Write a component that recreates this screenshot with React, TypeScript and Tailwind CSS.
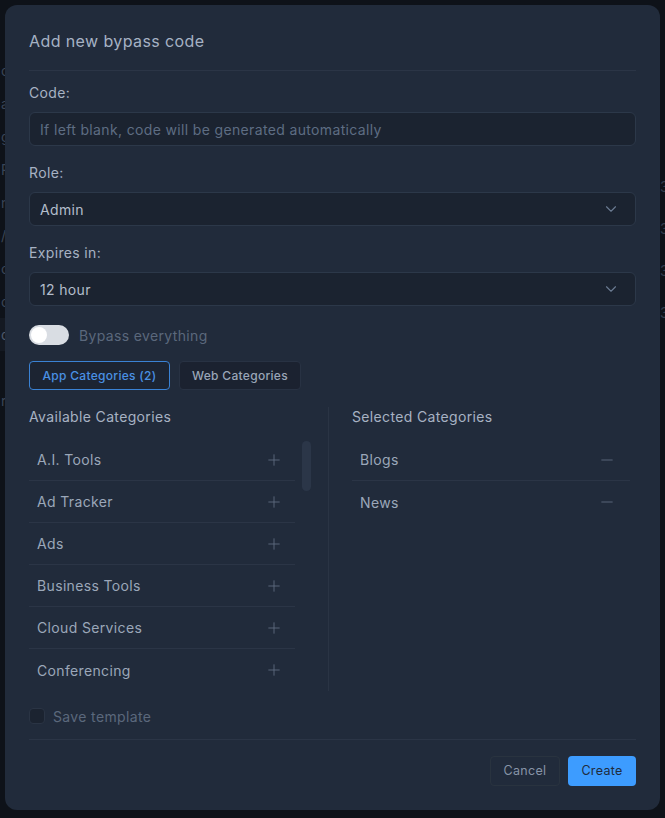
import { ChevronDown, Plus, Minus } from "lucide-react";

const available = ["A.I. Tools", "Ad Tracker", "Ads", "Business Tools", "Cloud Services", "Conferencing"];
const selected = ["Blogs", "News"];
const bgLeft = ["c", "a", "g", "R", "m", "/", "c", "c", "d", "", "r"];

function Label({ children }: { children: string }) {
  return <div className="h-5 text-[14px] leading-5 tracking-[0.35px] text-[#a7b2c3]">{children}</div>;
}

function Select({ value }: { value: string }) {
  return (
    <div className="mt-[9px] h-[34px] rounded-md border border-[#2c3849] bg-[#1b2330] px-[10px] flex items-center justify-between">
      <span className="text-[14px] tracking-[0.35px] text-[#b3bdcb]">{value}</span>
      <ChevronDown size={18} strokeWidth={1.5} className="text-[#6b7b92] mr-[5px]" />
    </div>
  );
}

export default function App() {
  return (
    <div
      className="relative w-[665px] h-[818px] overflow-hidden bg-[#0e1219]"
      style={{ fontFamily: "Inter, 'Noto Sans', sans-serif" }}
    >
      {/* page behind the overlay */}
      <div className="flex justify-between text-[14px] text-[#3a4557]">
        <div className="pt-[54px] flex flex-col">
          {bgLeft.map((c, i) => (
            <div key={i} className={`h-[33px] flex items-center pl-[1px] ${c === "d" ? "bg-[#141922] text-[#4d5a6d]" : ""}`}>
              {c}
            </div>
          ))}
        </div>
        <div className="pt-[176px] flex flex-col w-[6px] overflow-hidden">
          {["3", "3", "3", "3"].map((c, i) => (
            <div key={i} className="h-[42px] pl-[1px] text-[#333e4e]">{c}</div>
          ))}
        </div>
      </div>

      <div className="absolute left-[5px] top-[5px] w-[655px] h-[805px] rounded-xl bg-[#212b3b] px-6 pt-6 flex flex-col">
        <h2 className="text-[16px] leading-6 tracking-[0.4px] text-[#a6b2c4]">Add new bypass code</h2>
        <div className="mt-[17px] h-px bg-[#2b3546]" />

        <div className="mt-3">
          <Label>Code:</Label>
          <div className="mt-[9px] h-[34px] rounded-md border border-[#2c3849] bg-[#1b2330] px-[10px] flex items-center">
            <span className="text-[14px] tracking-[0.35px] text-[#5e6d83]">If left blank, code will be generated automatically</span>
          </div>
        </div>

        <div className="mt-[17px]">
          <Label>Role:</Label>
          <Select value="Admin" />
        </div>

        <div className="mt-[17px]">
          <Label>Expires in:</Label>
          <Select value="12 hour" />
        </div>

        <div className="mt-[19px] h-5 flex items-center gap-[10px]">
          <div className="w-10 h-5 rounded-full bg-[#d9dde3] p-[2px] flex items-center">
            <div className="w-4 h-4 rounded-full bg-white" />
          </div>
          <span className="text-[14px] tracking-[0.35px] text-[#5b687c]">Bypass everything</span>
        </div>

        <div className="mt-4 flex gap-[9px]">
          <button className="h-[29px] w-[141px] rounded border border-[#3a82d4] bg-[#1c2432] text-[12px] font-medium tracking-[0.3px] text-[#4a91e4]">
            App Categories (2)
          </button>
          <button className="h-[29px] w-[122px] rounded border border-[#283243] bg-[#1b2230] text-[12px] font-medium tracking-[0.3px] text-[#9aa6b8]">
            Web Categories
          </button>
        </div>

        <div className="mt-[17px] flex">
          <div className="w-[300px] border-r border-[#2a3444]">
            <Label>Available Categories</Label>
            <div className="mt-3 flex gap-[7px]">
              <div className="w-[266px]">
                {available.map((c, i) => (
                  <div
                    key={c}
                    className={`h-[42px] pl-2 pr-[12px] flex items-center justify-between ${i < available.length - 1 ? "border-b border-[#2b3546]" : ""}`}
                  >
                    <span className="text-[14px] tracking-[0.35px] text-[#9ba7b9]">{c}</span>
                    <Plus size={18} strokeWidth={1.2} className="text-[#5d6b80]" />
                  </div>
                ))}
              </div>
              <div className="mt-[2px] w-[9px] h-[50px] rounded-full bg-[#2b3648]" />
            </div>
          </div>
          <div className="flex-1 pl-[23px] pr-[6px]">
            <Label>Selected Categories</Label>
            <div className="mt-3">
              {selected.map((c, i) => (
                <div
                  key={c}
                  className={`h-[42px] pl-2 pr-[14px] flex items-center justify-between ${i < selected.length - 1 ? "border-b border-[#2b3546]" : ""}`}
                >
                  <span className="text-[14px] tracking-[0.35px] text-[#9ba7b9]">{c}</span>
                  <Minus size={18} strokeWidth={1.2} className="text-[#5d6b80]" />
                </div>
              ))}
            </div>
          </div>
        </div>

        <label className="mt-[17px] h-4 flex items-center gap-2">
          <span className="w-4 h-4 rounded border border-[#2a3444] bg-[#1b2330]" />
          <span className="text-[14px] tracking-[0.35px] text-[#5b687c]">Save template</span>
        </label>

        <div className="mt-[15px] h-px bg-[#2b3546]" />

        <div className="mt-4 flex justify-end gap-2">
          <button className="h-[30px] w-[70px] rounded border border-[#29333f] text-[12.5px] tracking-[0.3px] text-[#8794a7]">Cancel</button>
          <button className="h-[30px] w-[68px] rounded bg-[#3d9cff] text-[12.5px] tracking-[0.3px] text-[#1f2b3c]">Create</button>
        </div>
      </div>
    </div>
  );
}
